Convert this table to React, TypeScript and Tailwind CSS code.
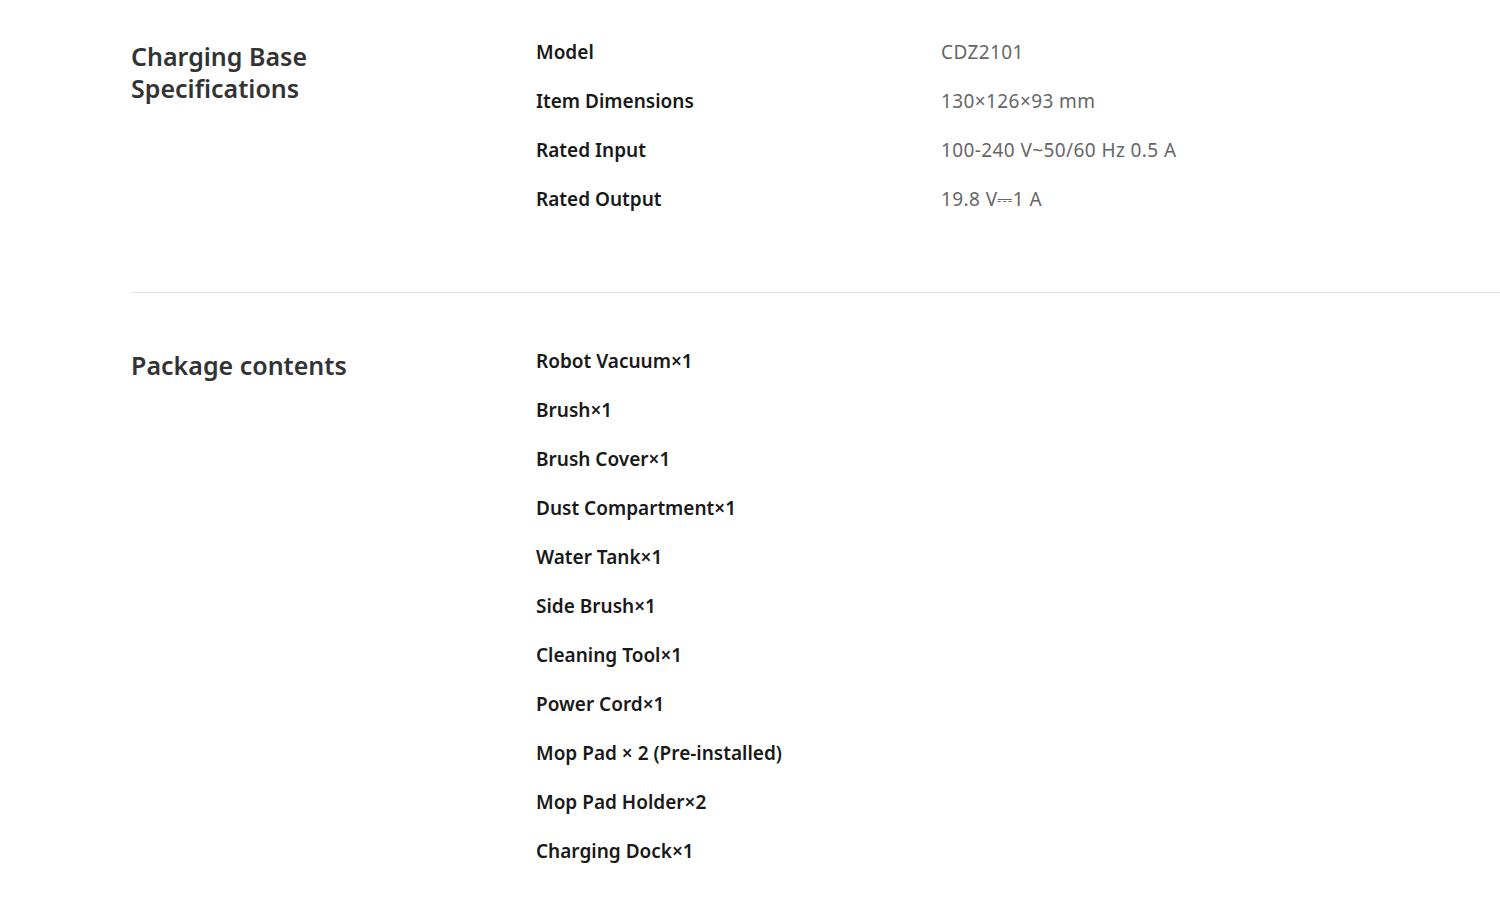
const chargingBase: [string, string][] = [
  ['Model', 'CDZ2101'],
  ['Item Dimensions', '130×126×93 mm'],
  ['Rated Input', '100-240 V~50/60 Hz 0.5 A'],
  ['Rated Output', '19.8 V⎓1 A'],
];

const packageContents = [
  'Robot Vacuum×1',
  'Brush×1',
  'Brush Cover×1',
  'Dust Compartment×1',
  'Water Tank×1',
  'Side Brush×1',
  'Cleaning Tool×1',
  'Power Cord×1',
  'Mop Pad × 2 (Pre-installed)',
  'Mop Pad Holder×2',
  'Charging Dock×1',
];

function SectionTitle({ children }: { children: React.ReactNode }) {
  return (
    <h2 className="w-[406px] shrink-0 pl-px text-[25px] leading-[32px] font-semibold text-[#333]">
      {children}
    </h2>
  );
}

export default function App() {
  return (
    <div
      className="min-h-screen bg-white pl-[130px]"
      style={{ fontFamily: '"Noto Sans", "Open Sans", sans-serif' }}
    >
      {/* charging base */}
      <section className="flex pt-[40px] pb-[81px] border-b border-[#e0e0e0]">
        <SectionTitle>
          Charging Base
          <br />
          Specifications
        </SectionTitle>
        <dl className="flex flex-col gap-[25px]">
          {chargingBase.map(([label, value]) => (
            <div key={label} className="flex text-[19px] leading-[24px]">
              <dt className="w-[405px] font-semibold text-[#191919]">{label}</dt>
              <dd className="text-[#666] tracking-[0.4px]">{value}</dd>
            </div>
          ))}
        </dl>
      </section>

      {/* package contents */}
      <section className="flex pt-[56px] pb-[40px]">
        <SectionTitle>Package contents</SectionTitle>
        <ul className="flex flex-col gap-[25px]">
          {packageContents.map((item) => (
            <li key={item} className="text-[19px] leading-[24px] font-semibold text-[#191919]">
              {item}
            </li>
          ))}
        </ul>
      </section>
    </div>
  );
}
